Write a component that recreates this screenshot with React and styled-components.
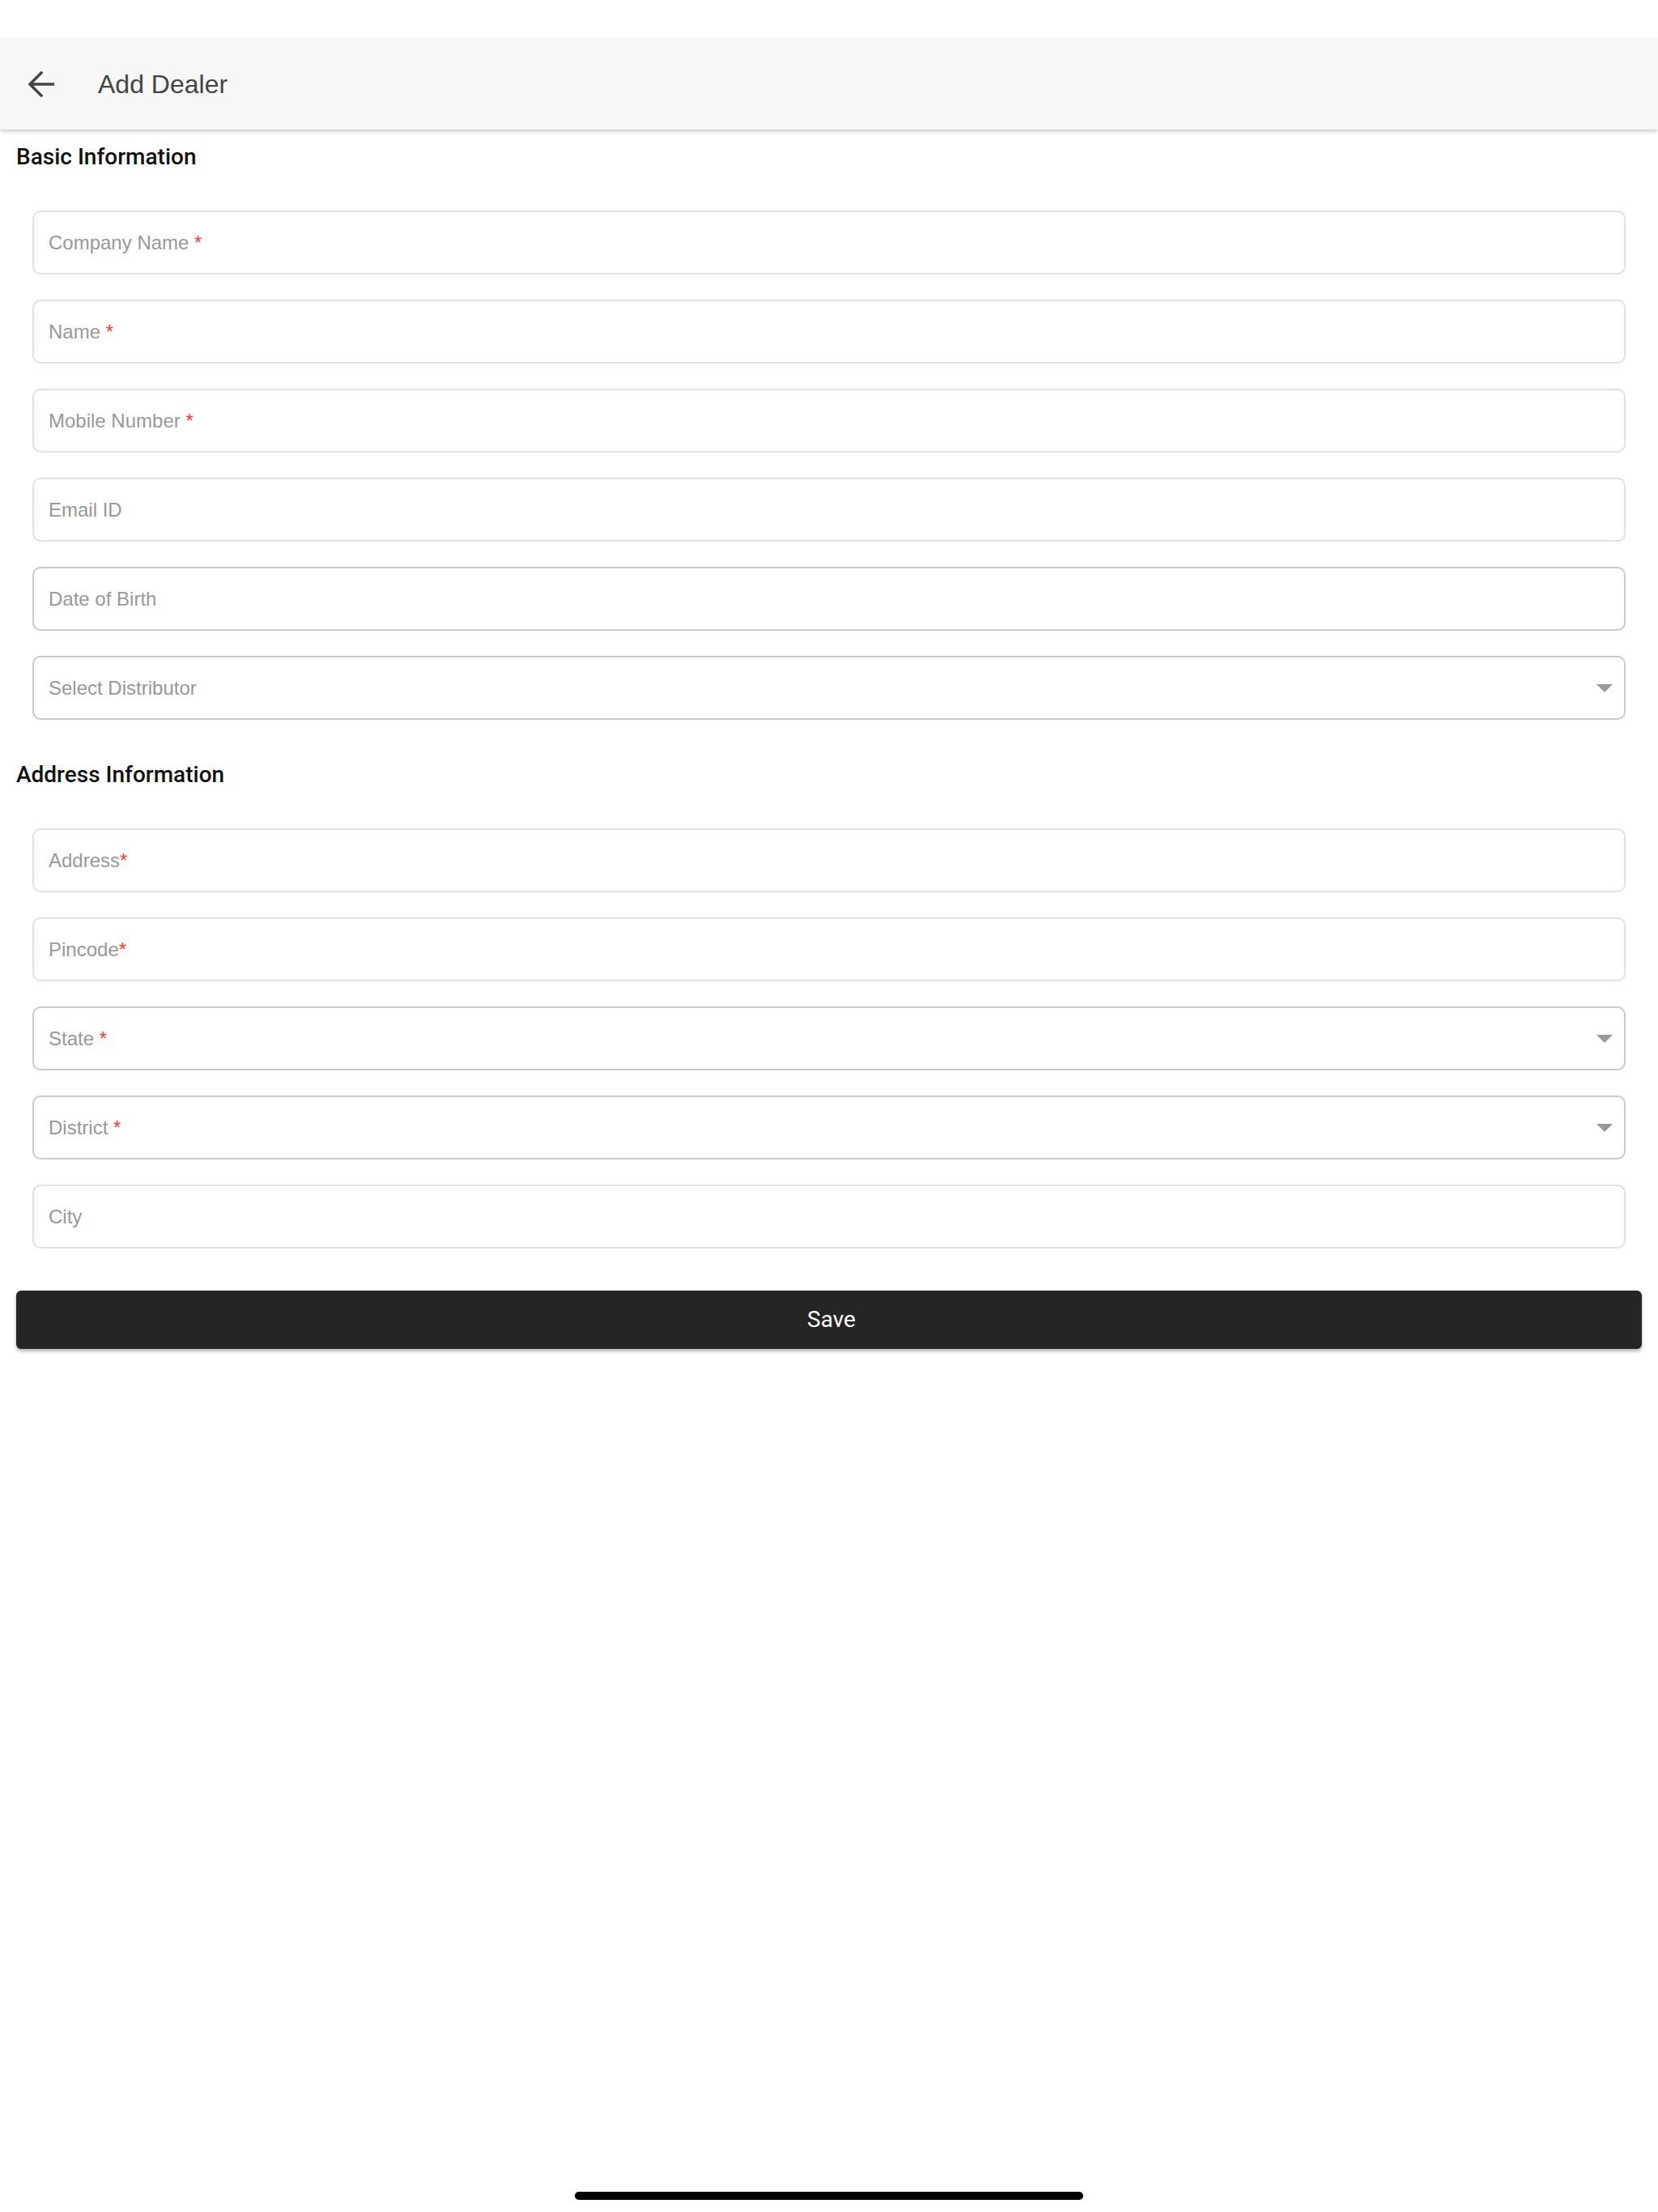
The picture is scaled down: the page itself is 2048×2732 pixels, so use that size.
import React from 'react'
import styled, { createGlobalStyle } from 'styled-components'

const GlobalStyle = createGlobalStyle`
  html, body {
    margin: 0;
    padding: 0;
    background: #fff;
  }
  * {
    box-sizing: border-box;
  }
`

// field list for both sections
const basicFields = [
  { label: 'Company Name', required: true, gap: true },
  { label: 'Name', required: true, gap: true },
  { label: 'Mobile Number', required: true, gap: true },
  { label: 'Email ID' },
  { label: 'Date of Birth', strong: true },
  { label: 'Select Distributor', strong: true, select: true },
]

const addressFields = [
  { label: 'Address', required: true },
  { label: 'Pincode', required: true },
  { label: 'State', required: true, gap: true, strong: true, select: true },
  { label: 'District', required: true, gap: true, strong: true, select: true },
  { label: 'City' },
]

const BackIcon = () => (
  <svg width='32' height='32' viewBox='0 0 32 32' fill='none'>
    <path
      d='M31 16H3M16 2L2 16l14 14'
      stroke='#444'
      strokeWidth='3.4'
      strokeLinecap='square'
    />
  </svg>
)

const FormField = ({ label, required, gap, strong, select }) => (
  <Field strong={strong}>
    <Placeholder>
      {label}
      {required && <Required>{gap ? ' *' : '*'}</Required>}
    </Placeholder>
    {select && <Caret />}
  </Field>
)

const App = () => {
  return (
    <>
      <GlobalStyle />
      <Page>
        <AppBar>
          <BackButton type='button' aria-label='back'>
            <BackIcon />
          </BackButton>
          <Title>Add Dealer</Title>
        </AppBar>
        <Content>
          <SectionTitle>Basic Information</SectionTitle>
          <FieldList>
            {basicFields.map(f => (
              <FormField key={f.label} {...f} />
            ))}
          </FieldList>
          <SectionTitle spaced>Address Information</SectionTitle>
          <FieldList>
            {addressFields.map(f => (
              <FormField key={f.label} {...f} />
            ))}
          </FieldList>
          <SaveButton type='button'>Save</SaveButton>
        </Content>
        <HomeIndicator />
      </Page>
    </>
  )
}

export default App

const Page = styled.div`
  min-height: 2732px;
  padding-top: 48px;
  display: flex;
  flex-direction: column;
  background: #fff;
`

const AppBar = styled.header`
  height: 112px;
  background-color: #f7f7f7;
  display: flex;
  align-items: center;
  padding-left: 35px;
  box-shadow: 0 2px 5px rgba(0, 0, 0, 0.22);
  position: relative;
  z-index: 1;
`

const BackButton = styled.button`
  border: none;
  background: none;
  padding: 0;
  width: 32px;
  height: 32px;
  display: flex;
  cursor: pointer;
`

const Title = styled.h1`
  margin: 0 0 0 54px;
  font-family: 'Liberation Sans', Arial, sans-serif;
  font-size: 32px;
  font-weight: 400;
  color: #444;
`

const Content = styled.main`
  padding: 0 20px;
  display: flex;
  flex-direction: column;
`

const SectionTitle = styled.h2`
  margin: ${p => (p.spaced ? '52px' : '18px')} 0 0;
  font-family: Roboto, sans-serif;
  font-size: 28px;
  line-height: 32px;
  font-weight: 500;
  color: #111;
`

const FieldList = styled.div`
  margin-top: 50px;
  padding: 0 20px;
  display: flex;
  flex-direction: column;
  gap: 31px;
`

const Field = styled.div`
  height: 79px;
  border: 2px solid ${p => (p.strong ? '#cbcbcb' : '#e2e2e2')};
  border-radius: 10px;
  background: #fff;
  display: flex;
  align-items: center;
  justify-content: space-between;
  padding: 0 14px 0 18px;
`

const Placeholder = styled.span`
  font-family: 'Liberation Sans', Arial, sans-serif;
  font-size: 24px;
  color: #999;
  white-space: pre;
`

const Required = styled.span`
  color: #ff3b3b;
`

const Caret = styled.span`
  width: 0;
  height: 0;
  border-left: 10px solid transparent;
  border-right: 10px solid transparent;
  border-top: 10px solid #999;
`

const SaveButton = styled.button`
  margin-top: 52px;
  height: 72px;
  width: 100%;
  padding: 0 0 2px 6px;
  border: none;
  border-radius: 6px;
  background-color: #252525;
  color: #fff;
  font-family: Roboto, sans-serif;
  font-size: 28px;
  font-weight: 400;
  box-shadow: 0 3px 4px rgba(0, 0, 0, 0.3);
  cursor: pointer;
`

const HomeIndicator = styled.div`
  margin: auto auto 15px;
  width: 628px;
  height: 10px;
  border-radius: 5px;
  background: #000;
`
